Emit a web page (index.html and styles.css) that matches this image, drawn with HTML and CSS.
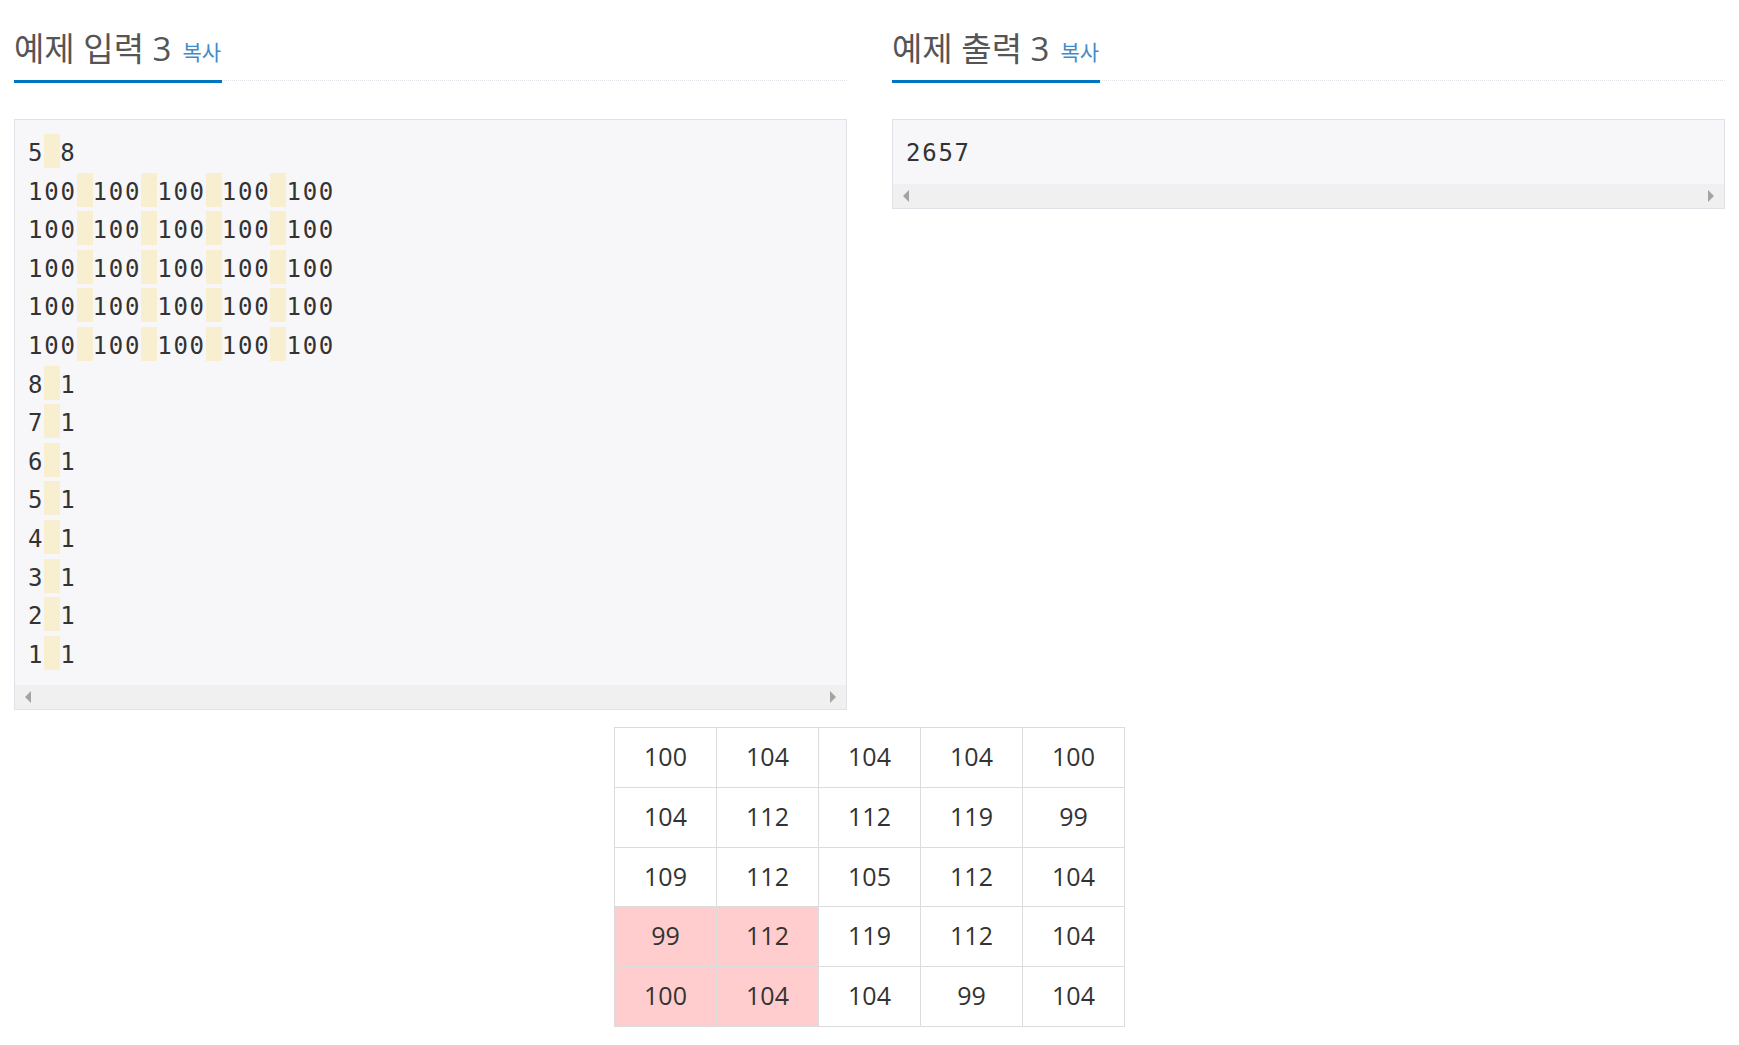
FILE: index.html
```html
<!DOCTYPE html>
<html lang="ko">
<head>
<meta charset="utf-8">
<title>예제</title>
<link rel="stylesheet" href="styles.css">
</head>
<body>
<div class="page">
  <div class="cols">
    <section class="col">
      <div class="headline"><h2>예제 입력 3<a class="copy">복사</a></h2></div>
      <div class="sample">
        <pre class="code">5<span class="sp"></span>8
100<span class="sp"></span>100<span class="sp"></span>100<span class="sp"></span>100<span class="sp"></span>100
100<span class="sp"></span>100<span class="sp"></span>100<span class="sp"></span>100<span class="sp"></span>100
100<span class="sp"></span>100<span class="sp"></span>100<span class="sp"></span>100<span class="sp"></span>100
100<span class="sp"></span>100<span class="sp"></span>100<span class="sp"></span>100<span class="sp"></span>100
100<span class="sp"></span>100<span class="sp"></span>100<span class="sp"></span>100<span class="sp"></span>100
8<span class="sp"></span>1
7<span class="sp"></span>1
6<span class="sp"></span>1
5<span class="sp"></span>1
4<span class="sp"></span>1
3<span class="sp"></span>1
2<span class="sp"></span>1
1<span class="sp"></span>1</pre>
        <div class="hscroll"><span class="arr-l"></span><span class="arr-r"></span></div>
      </div>
    </section>
    <section class="col">
      <div class="headline"><h2>예제 출력 3<a class="copy">복사</a></h2></div>
      <div class="sample">
        <pre class="code">2657</pre>
        <div class="hscroll"><span class="arr-l"></span><span class="arr-r"></span></div>
      </div>
    </section>
  </div>
  <table class="grid">
    <tr><td>100</td><td>104</td><td>104</td><td>104</td><td>100</td></tr>
    <tr><td>104</td><td>112</td><td>112</td><td>119</td><td>99</td></tr>
    <tr><td>109</td><td>112</td><td>105</td><td>112</td><td>104</td></tr>
    <tr><td class="hl">99</td><td class="hl">112</td><td>119</td><td>112</td><td>104</td></tr>
    <tr><td class="hl">100</td><td class="hl">104</td><td>104</td><td>99</td><td>104</td></tr>
  </table>
</div>
</body>
</html>
```

FILE: styles.css
```css
html, body {
  margin: 0;
  padding: 0;
  background: #fff;
}

.page {
  padding: 0 14px;
  font-family: "Open Sans", "Noto Sans CJK KR", sans-serif;
  color: #333;
}

.cols {
  display: grid;
  grid-template-columns: 1fr 1fr;
  column-gap: 45px;
  align-items: start;
}

.headline {
  height: 80px;
  display: flex;
  align-items: flex-end;
  border-bottom: 1px dotted #dfe3e8;
  margin-bottom: 38px;
}

.headline h2 {
  margin: 0 0 -3px 0;
  padding: 0 1px 4px 0;
  font-weight: 400;
  font-size: 33px;
  line-height: 46px;
  color: #555;
  border-bottom: 3px solid #0076c0;
  white-space: nowrap;
}

.copy {
  margin-left: 11px;
  font-size: 21px;
  color: #428bca;
  cursor: pointer;
  position: relative;
  top: -1px;
}

.sample {
  border: 1px solid #e1e1e8;
  background: #f7f7f9;
}

.code {
  margin: 0;
  padding: 14px 13px 11px 13px;
  font-family: "DejaVu Sans Mono", monospace;
  font-size: 24px;
  letter-spacing: 1.75px;
  line-height: 38.6px;
  color: #333;
  white-space: pre;
  overflow: hidden;
}

.sp {
  display: inline-block;
  width: 16px;
  height: 34px;
  vertical-align: top;
  background: #f7efcf;
}

.hscroll {
  height: 24px;
  background: #f0f0f0;
  display: flex;
  justify-content: space-between;
  align-items: center;
  padding: 0 10px;
}

.arr-l {
  width: 0;
  height: 0;
  border-top: 6px solid transparent;
  border-bottom: 6px solid transparent;
  border-right: 6px solid #a3a3a3;
}

.arr-r {
  width: 0;
  height: 0;
  border-top: 6px solid transparent;
  border-bottom: 6px solid transparent;
  border-left: 6px solid #a3a3a3;
}

.grid {
  margin: 17px auto 0;
  border-collapse: collapse;
}

.grid td {
  width: 101px;
  height: 55.7px;
  padding: 0 0 3px 0;
  border: 1px solid #dcdcdc;
  text-align: center;
  vertical-align: middle;
  font-size: 25px;
  color: #333;
}

.grid td.hl {
  background: #ffcdcd;
}
```
